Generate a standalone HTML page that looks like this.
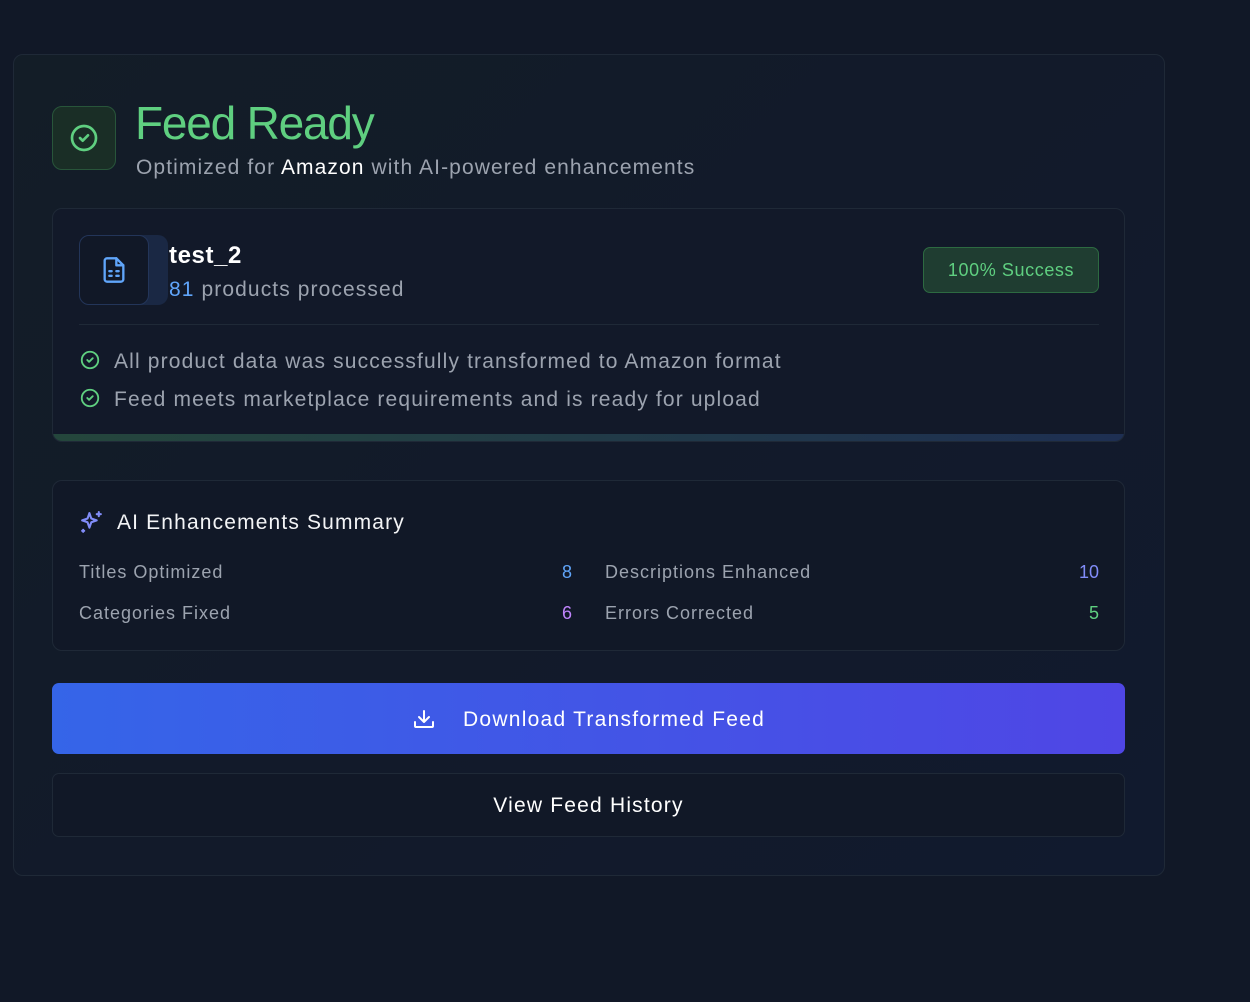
<!DOCTYPE html>
<html><head><style>
*{box-sizing:border-box;margin:0;padding:0}
body{width:1250px;height:1002px;background:#111827;font-family:"Liberation Sans",sans-serif;position:relative;overflow:hidden}
.a{position:absolute}
.card{left:13px;top:54px;width:1152px;height:822px;border:1px solid #1f2937;border-radius:10px;background:linear-gradient(135deg,#131d27 0%,#121a2a 50%,#111a2e 100%)}
.t{white-space:nowrap}
.l{letter-spacing:1.1px}
.m{letter-spacing:1px}
</style></head><body>
<div class="a card"></div>
<div class="a" style="left:52px;top:106px;width:64px;height:64px;border-radius:10px;background:#1a2e26;border:1px solid #28553a"></div>
<svg class="a" style="left:68px;top:122px" width="32" height="32" viewBox="0 0 24 24" fill="none" stroke="#5fcf80" stroke-width="2" stroke-linecap="round" stroke-linejoin="round"><circle cx="12" cy="12" r="9"/><path d="M9 12l2 2 4-4"/></svg>
<div class="a t" style="left:135px;top:96px;font-size:46px;color:#5fcf80;letter-spacing:-1.2px">Feed Ready</div>
<div class="a t l" style="left:136px;top:156px;font-size:21px;color:#9ca3af">Optimized for <span style="color:#fff">Amazon</span> with AI-powered enhancements</div>

<div class="a" style="left:52px;top:208px;width:1073px;height:234px;border:1px solid #1f2937;border-radius:10px;background:#121929;overflow:hidden">
 <div class="a" style="left:0;bottom:0;width:100%;height:7px;background:linear-gradient(90deg,#24463c,#1e2f52)"></div>
</div>
<div class="a" style="left:96px;top:235px;width:72px;height:70px;border-radius:10px;background:#1a2844"></div>
<div class="a" style="left:79px;top:235px;width:70px;height:70px;border-radius:10px;background:#111827;border:1px solid #233559"></div>
<svg class="a" style="left:100px;top:254px" width="28" height="32" viewBox="0 0 24 24" fill="none" stroke="#60a5fa" stroke-width="2" stroke-linecap="round" stroke-linejoin="round"><path d="M14 2H6a2 2 0 0 0-2 2v16a2 2 0 0 0 2 2h12a2 2 0 0 0 2-2V8z"/><path d="M14 2v6h6"/><path d="M8 13h2M14 13h2M8 17h2M14 17h2"/></svg>
<div class="a t" style="left:169px;top:242px;font-size:24px;color:#fff;font-weight:bold;letter-spacing:.6px">test_2</div>
<div class="a t l" style="left:169px;top:278px;font-size:21px;color:#9ca3af"><span style="color:#60a5fa">81</span> products processed</div>
<div class="a t" style="left:923px;top:247px;width:176px;height:46px;border-radius:7px;background:#1f3d31;border:1px solid #2d6a41;color:#5fcf80;font-size:18px;text-align:center;line-height:44px;letter-spacing:.6px">100% Success</div>
<div class="a" style="left:79px;top:324px;width:1020px;height:1px;background:#1f2937"></div>
<svg class="a" style="left:79px;top:349px" width="22" height="22" viewBox="0 0 24 24" fill="none" stroke="#5fcf80" stroke-width="2" stroke-linecap="round" stroke-linejoin="round"><circle cx="12" cy="12" r="9"/><path d="M9 12l2 2 4-4"/></svg>
<div class="a t" style="left:114px;top:350px;font-size:21px;color:#9ca3af;letter-spacing:1.15px">All product data was successfully transformed to Amazon format</div>
<svg class="a" style="left:79px;top:387px" width="22" height="22" viewBox="0 0 24 24" fill="none" stroke="#5fcf80" stroke-width="2" stroke-linecap="round" stroke-linejoin="round"><circle cx="12" cy="12" r="9"/><path d="M9 12l2 2 4-4"/></svg>
<div class="a t" style="left:114px;top:388px;font-size:21px;color:#9ca3af;letter-spacing:1.15px">Feed meets marketplace requirements and is ready for upload</div>

<div class="a" style="left:52px;top:480px;width:1073px;height:171px;border:1px solid #1f2937;border-radius:10px;background:#111827"></div>
<svg class="a" style="left:79px;top:510px" width="25" height="25" viewBox="0 0 24 24" fill="none" stroke="#818cf8" stroke-width="2" stroke-linecap="round" stroke-linejoin="round"><path d="M10 3l1.8 5.2L17 10l-5.2 1.8L10 17l-1.8-5.2L3 10l5.2-1.8z"/><path d="M19 2v4M17 4h4M4 19v2M3 20h2"/></svg>
<div class="a t" style="left:117px;top:511px;font-size:21px;color:#f3f4f6;letter-spacing:1.15px">AI Enhancements Summary</div>
<div class="a t m" style="left:79px;top:562px;font-size:18px;color:#9ca3af">Titles Optimized</div>
<div class="a t" style="left:520px;width:52px;text-align:right;top:562px;font-size:18px;color:#60a5fa">8</div>
<div class="a t m" style="left:605px;top:562px;font-size:18px;color:#9ca3af">Descriptions Enhanced</div>
<div class="a t" style="left:1048px;width:51px;text-align:right;top:562px;font-size:18px;color:#818cf8">10</div>
<div class="a t m" style="left:79px;top:603px;font-size:18px;color:#9ca3af">Categories Fixed</div>
<div class="a t" style="left:520px;width:52px;text-align:right;top:603px;font-size:18px;color:#c084fc">6</div>
<div class="a t m" style="left:605px;top:603px;font-size:18px;color:#9ca3af">Errors Corrected</div>
<div class="a t" style="left:1048px;width:51px;text-align:right;top:603px;font-size:18px;color:#5fcf80">5</div>

<div class="a" style="left:52px;top:683px;width:1073px;height:71px;border-radius:7px;background:linear-gradient(90deg,#3565e8,#4f46e5)"></div>
<svg class="a" style="left:412px;top:707px" width="24" height="24" viewBox="0 0 24 24" fill="none" stroke="#fff" stroke-width="2" stroke-linecap="round" stroke-linejoin="round"><path d="M12 4v11M7 10l5 5 5-5"/><path d="M3 15v4a1 1 0 0 0 1 1h16a1 1 0 0 0 1-1v-4"/></svg>
<div class="a t" style="left:463px;top:708px;font-size:21px;color:#fff;letter-spacing:1.25px;font-weight:500">Download Transformed Feed</div>
<div class="a" style="left:52px;top:773px;width:1073px;height:64px;border-radius:7px;border:1px solid #1f2937;background:#111827"></div>
<div class="a t" style="left:52px;width:1073px;text-align:center;top:794px;font-size:21px;color:#fff;letter-spacing:1.2px">View Feed History</div>
</body></html>
